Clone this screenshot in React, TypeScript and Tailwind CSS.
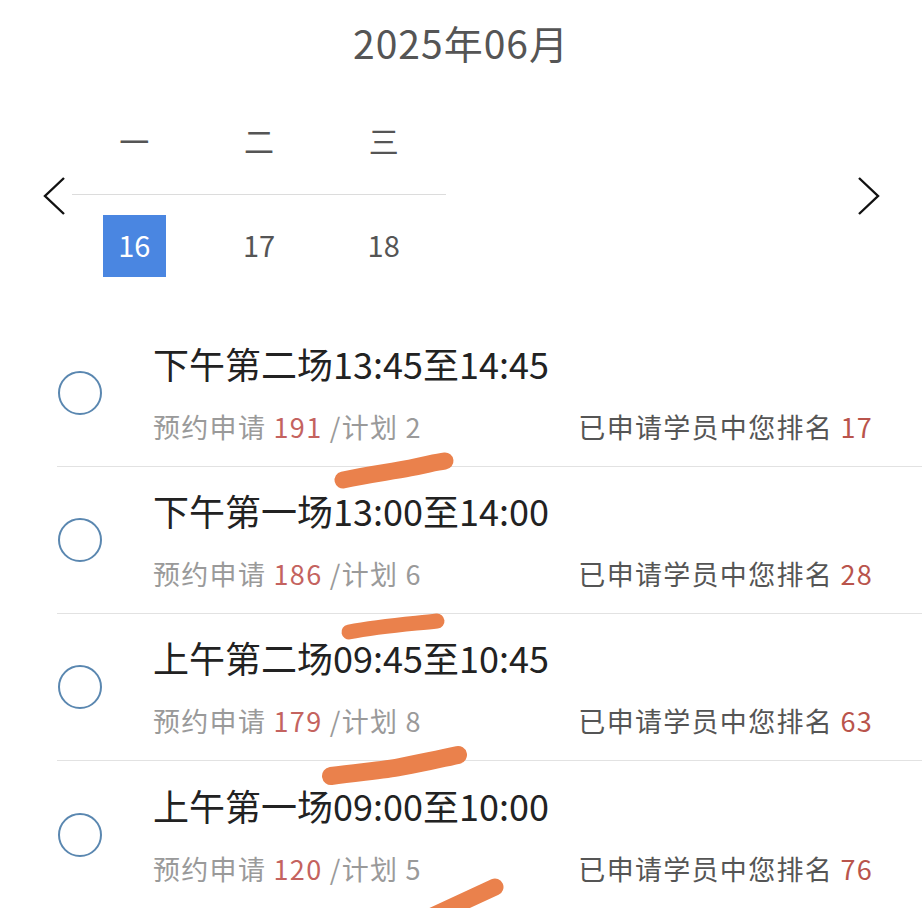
import React from "react";

const font = { fontFamily: '"Noto Sans CJK SC", "Noto Sans", sans-serif' };

type Item = { title: string; applied: number; plan: number; rank: number };

const items: Item[] = [
  { title: "下午第二场13:45至14:45", applied: 191, plan: 2, rank: 17 },
  { title: "下午第一场13:00至14:00", applied: 186, plan: 6, rank: 28 },
  { title: "上午第二场09:45至10:45", applied: 179, plan: 8, rank: 63 },
  { title: "上午第一场09:00至10:00", applied: 120, plan: 5, rank: 76 },
];

function Chevron({ dir }: { dir: "left" | "right" }) {
  return (
    <svg width="24" height="38" viewBox="0 0 24 38" fill="none">
      {dir === "left" ? (
        <polyline points="21,1 2,19 21,37" stroke="#111" strokeWidth="2.4" strokeLinejoin="miter" />
      ) : (
        <polyline points="3,1 22,19 3,37" stroke="#111" strokeWidth="2.4" strokeLinejoin="miter" />
      )}
    </svg>
  );
}

export default function App() {
  return (
    <div className="relative w-[922px] h-[908px] overflow-hidden bg-white" style={font}>
      <div className="pt-[18px] h-[66px] flex items-center justify-center text-[39px] leading-[48px] tracking-[1px] text-[#555]">
        2025年06月
      </div>

      <div className="mt-[49px] flex items-center pl-[43px] pr-[42px]">
        <Chevron dir="left" />
        <div className="ml-[5px] w-[374px] flex flex-col">
          <div className="grid grid-cols-3 h-[56px] pb-[6px] items-center text-[30px] text-[#555]">
            <div className="text-center">一</div>
            <div className="text-center">二</div>
            <div className="text-center">三</div>
          </div>
          <div className="mt-[23px] h-px bg-[#dcdcdc]" />
          <div className="mt-[20px] grid grid-cols-3 h-[62px] items-center text-[29px] text-[#555]">
            <div className="flex justify-center">
              <div className="w-[63px] h-[62px] bg-[#4a86e1] text-white flex items-center justify-center pb-[2px]">16</div>
            </div>
            <div className="text-center pb-[2px]">17</div>
            <div className="text-center pb-[2px]">18</div>
          </div>
        </div>
        <div className="flex-1" />
        <Chevron dir="right" />
      </div>

      <div className="mt-[43px] ml-[57px]">
        {items.map((it, i) => (
          <div
            key={it.title}
            className={
              i < items.length - 1
                ? "flex items-center border-b border-[#e2e2e2] h-[147px]"
                : "flex items-center h-[147px]"
            }
          >
            <div className="ml-[1px] w-[44px] h-[44px] rounded-full border-2 border-[#5a87b0]" />
            <div className="ml-[51px] flex-1 pr-[49px]">
              <div className="h-[44px] leading-[44px] text-[36px] text-[#222]">{it.title}</div>
              <div className="mt-[24px] h-[36px] leading-[36px] flex justify-between text-[27px] tracking-[1.3px]">
                <div className="text-[#9a9a9a]">
                  预约申请 <span className="text-[#c4635f]">{it.applied}</span> /计划 {it.plan}
                </div>
                <div className="text-[#555]">
                  已申请学员中您排名 <span className="text-[#b9544c]">{it.rank}</span>
                </div>
              </div>
            </div>
          </div>
        ))}
      </div>

      <svg className="absolute inset-0 pointer-events-none" width="922" height="908" viewBox="0 0 922 908" fill="none">
        <g stroke="#ea814c" strokeLinecap="round" strokeLinejoin="round">
          <path d="M343 480 C 370 474, 390 472, 410 468 S 436 462, 445 461" strokeWidth="17" />
          <path d="M349 632 C 380 626, 410 624, 437 621" strokeWidth="15" />
          <path d="M331 776 C 360 772, 385 770, 400 767 S 445 758, 458 755" strokeWidth="18" />
          <path d="M428 918 L 495 887" strokeWidth="17" />
        </g>
      </svg>
    </div>
  );
}
